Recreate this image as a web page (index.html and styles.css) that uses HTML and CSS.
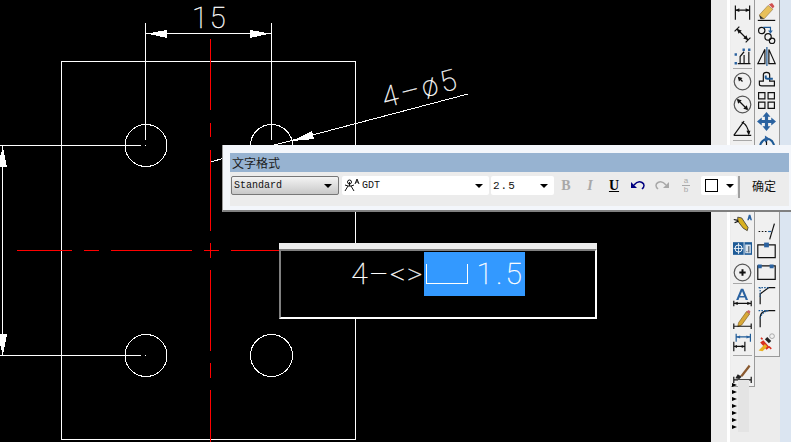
FILE: index.html
```html
<!DOCTYPE html>
<html lang="zh">
  <head>
    <meta charset="UTF-8" />
    <title>文字格式</title>
    <link rel="stylesheet" href="styles.css">
  </head>
  <body>
    <div class="screen">
      <!-- model space: the drawing is a free canvas -->
      <svg class="drawing" width="791" height="442" viewBox="0 0 791 442">
        <g class="white">
          <rect x="61.5" y="61.5" width="294" height="378" />
          <circle cx="146" cy="145.5" r="21" />
          <circle cx="271.5" cy="145.5" r="21" />
          <circle cx="146" cy="355.5" r="21" />
          <circle cx="271.5" cy="355.5" r="21" />
          <path d="M145.5 23V140M271.5 23V140M145.5 33.5H271.5M0 145.5H141M0 355.5H141M2.5 146V355M145 145.5h1M145 355.5h1" />
          <path d="M210 162L468 94" class="soft" />
        </g>
        <g class="red">
          <path d="M210.5 39V110M210.5 123V137M210.5 150V231M210.5 243V258M210.5 270V351M210.5 363V378M210.5 390V442" />
          <path d="M17 250.5H72M84 250.5H99M111 250.5H192M204 250.5H219M231 250.5H279" />
        </g>
        <g class="arrows">
          <polygon points="147,33.5 167,30 167,38" />
          <polygon points="270,33.5 250,30 250,38" />
          <polygon points="3,147 -3,167 7,167" />
          <polygon points="3,355 -3,334 7,334" />
          <polygon points="292,141 312,131 314,139" />
        </g>
        <text class="cad_text" x="192" y="28">15</text>
        <text class="cad_text small" transform="translate(385 108) rotate(-15)">4–ø5</text>
      </svg>

      <aside class="side">
        <div class="col">
          <div class="tool"><svg viewBox="0 0 24 24"><path class="k" d="M3 3V21M21 3V21M3 9H21" /><path class="f" d="M3 9l5-2.500v5zM21 9l-5-2.500v5z" /></svg></div>
          <div class="tool"><svg viewBox="0 0 24 24"><path class="k" d="M2 8L8 2M16 22L22 16M5 5L19 19" /><path class="f" d="M5 5l6 2-4 4zM19 19l-6-2 4-4z" /></svg></div>
          <div class="tool"><svg viewBox="0 0 24 24"><path class="k" d="M6 21H22M9 21V12L14 6M14 21V10M20 21V6" /><path class="b" d="M2 8h3v3H2zM2 19h3v3H2zM12 2h3v3h-3zM19 2h3v3h-3z" /></svg></div>
          <div class="sep"></div>
          <div class="tool h23"><svg viewBox="0 0 24 24"><circle class="g" cx="12" cy="12" r="10.500" /><path class="k" d="M12 12L7 7" /><path class="f" d="M6 6l6 1.500-4.500 4.500z" /></svg></div>
          <div class="tool h23"><svg viewBox="0 0 24 24"><circle class="g" cx="12" cy="12" r="10.500" /><path class="k" d="M6 6L18 18" /><path class="f" d="M5 5l6 1.500-4.500 4.500zM19 19l-6-1.500 4.500-4.500z" /></svg></div>
          <div class="tool h23"><svg viewBox="0 0 24 24"><path class="k" d="M1 22H23M1 22L14 4M11 5Q19 9 20 20" /><path class="f" d="M20 22l-3-6 5 0z" /></svg></div>
          <div class="sep"></div>
          <div class="tool_gap"></div>
          <div class="tool h23"><svg viewBox="0 0 24 24"><path d="M6 4l5 1 8 12-1 4-5-3-7-9z" fill="#d8b020" stroke="#333" /><path class="k" d="M1 7l5 1M2 11l5-2" /><path class="b" d="M18 8l2-7 2 0 2 7h-2l-.5-2h-1l-.5 2z" /></svg></div>
          <div class="tool h27"><svg viewBox="0 0 24 24"><rect x="0" y="4" width="24" height="16" fill="#1d5a96" /><circle cx="7" cy="12" r="4.500" fill="none" stroke="#fff" stroke-width="1.200" /><path d="M7 5V19M1 12H13M14 4V20" stroke="#fff" fill="none" /><rect x="15.500" y="7" width="7" height="11" fill="#d9e4ef" /><path d="M20 9V17M17 16h1" stroke="#123" fill="none" /></svg></div>
          <div class="tool h20"><svg viewBox="0 0 24 24"><circle class="g" cx="12" cy="12" r="10.500" /><path class="k bold" d="M12 8V16M8 12H16" /></svg></div>
          <div class="sep low"></div>
          <div class="tool"><svg viewBox="0 0 24 24"><path class="b" d="M10 1h3l6 14h-3l-1-3H8l-1 3H4zM9 10h5l-2.500-6z" /><path class="k" d="M1 16V23M23 16V23M1 19.500H23" /><path class="f" d="M1 19.500l5-2v4zM23 19.500l-5-2v4z" /></svg></div>
          <div class="tool h23"><svg viewBox="0 0 24 24"><path d="M7 16L17 2l4 3-10 14-5 2z" fill="#d8a838" stroke="#6b4a10" stroke-width=".7" /><path d="M17 2l4 3 1-3-2-2z" fill="#c66" /><path class="k" d="M1 17V24M23 17V24M1 20.500H23" /></svg></div>
          <div class="tool h23"><svg viewBox="0 0 24 24"><path class="bs" d="M4 1V11M22 1V11M4 5H22" /><path class="b" d="M4 5l5-2v4zM22 5l-5-2v4z" /><path class="k" d="M1 11V23M15 11V23M1 17H15" /><path class="f" d="M1 17l4-2v4zM15 17l-4-2v4z" /></svg></div>
          <div class="sep wide"></div>
          <div class="tool"><svg viewBox="0 0 24 24"><path d="M9 15L20 1l2 2-10 13z" fill="#8a5a30" /><path d="M6 13l5 3-3 3-5-1z" fill="#222" /><path class="k" d="M1 16V24M23 16V24M1 20H23" /></svg></div>
        </div>
        <div class="col second">
          <div class="tool"><svg viewBox="0 0 24 24"><path d="M3 15L14 3l6 5-11 12-4 0z" fill="#e8c05a" stroke="#7a5a20" stroke-width=".6" /><path d="M15 2l5 5 2-3-3-4z" fill="#d05050" /><path d="M3 15l6 5H4z" fill="#333" /><path class="k" d="M1 22H23" /></svg></div>
          <div class="tool"><svg viewBox="0 0 24 24"><circle class="k" cx="6" cy="7" r="4" /><circle class="k" cx="14" cy="15" r="4" /><circle class="k" cx="19" cy="20" r="3.500" /><path class="bs" d="M8 3H17V8" /><path class="b" d="M14 7h6l-3 4z" /></svg></div>
          <div class="tool"><svg viewBox="0 0 24 24"><path class="k" d="M10 3V21H1zM15 3V21H23z" /><path class="bs" d="M12.500 0V24" /></svg></div>
          <div class="tool h24"><svg viewBox="0 0 24 24"><path class="k" d="M3 18V14H8V6Q8 3 12 3T16 6V14H22V20H6Q3 20 3 18z" /><path class="bs bold" d="M11 7V10Q11 11 13 11H20" /></svg></div>
          <div class="tool h19"><svg viewBox="0 0 24 24"><path class="k" d="M2 2h8v8H2zM14 2h8v8h-8zM2 14h8v8H2zM14 14h8v8h-8z" /></svg></div>
          <div class="tool"><svg viewBox="0 0 24 24"><path class="b" d="M12 0l5 6h-3v4h4V7l6 5-6 5v-3h-4v4h3l-5 6-5-6h3v-4H6v3l-6-5 6-5v3h4V6H7z" /></svg></div>
          <div class="tool"><svg viewBox="0 0 24 24"><path class="bs bold" d="M5 22Q1 10 12 6Q21 6 22 18" /><path class="k" d="M12 8V22" /><path class="b" d="M10 2l6 4-6 5z" /></svg></div>
          <div class="tool_gap second_gap"></div>
          <div class="tool"><svg viewBox="0 0 24 24"><path class="k" d="M2 12H4M6 12H8M10 12H12" /><path class="bs" d="M14 12H18" /><path class="k" d="M16 22L22 2" /></svg></div>
          <div class="tool h16"><svg viewBox="0 0 24 24"><path class="k" d="M1 5H23V21H1z" /><path class="b" d="M9 2h6v6H9z" /></svg></div>
          <div class="tool h26"><svg viewBox="0 0 24 24"><path class="k" d="M1 5H23V22H1z" /><path class="b" d="M1 3h5v5H1zM16 3h5v5h-5z" /></svg></div>
          <div class="tool"><svg viewBox="0 0 24 24"><path class="k" d="M4 23V10L15 2H23" /><path class="dash" d="M2 2H15M4 14V2" /></svg></div>
          <div class="tool h24"><svg viewBox="0 0 24 24"><path class="k" d="M4 23V10Q5 2 15 2H23" /><path class="dash" d="M4 12Q6 4 14 2M2 2H15" /></svg></div>
          <div class="tool h24"><svg viewBox="0 0 24 24"><path d="M4 12l4-3 8 9-4 3z" fill="#d83020" /><path d="M2 22l8-8 3 3-6 6z" fill="#e8b020" /><path d="M10 8l3-3 5 5-3 3z" fill="#222" /><circle cx="19" cy="4" r="3" fill="none" stroke="#999" /><path d="M5 6l2 2M15 17l3 3" stroke="#d83020" stroke-width="2" /></svg></div>
        </div>
        <div class="flyouts">
          <i></i><i></i><i></i><i></i><i></i><i></i><i></i>
        </div>
      </aside>

      <div class="mtext_bar">
        <div class="bar_title">文字格式</div>
        <div class="bar_row">
          <div class="combo standard"><span>Standard</span><b class="caret"></b></div>
          <div class="combo font">
            <svg class="font_icon" width="16" height="15" viewBox="0 0 16 15"><path d="M1 13L4 8h3l3 5M5.500 8V4M3.500 4a2 2 0 1 0 4 0a2 2 0 1 0 -4 0M4 8L1 7M7 8l3-1" /><path d="M11 6l2-5 2 5M12 4h2" /></svg>
            <span>GDT</span><b class="caret"></b>
          </div>
          <div class="combo size"><span>2.5</span><b class="caret"></b></div>
          <div class="btn serif off">B</div>
          <div class="btn serif italic off">I</div>
          <div class="btn serif under">U</div>
          <div class="btn"><svg width="14" height="11" viewBox="0 0 14 11"><path d="M3 5Q7 0 11 2.500T11 9" fill="none" stroke="#000080" stroke-width="1.500" /><path d="M0 2v6h6z" fill="#000080" /></svg></div>
          <div class="btn"><svg width="14" height="11" viewBox="0 0 14 11"><path d="M11 5Q7 0 3 2.500T3 9" fill="none" stroke="#a8a8a8" stroke-width="1.500" /><path d="M14 2v6H8z" fill="#a8a8a8" /></svg></div>
          <div class="btn stack"><span>a</span><i></i><span>b</span></div>
          <div class="combo color"><i class="swatch"></i><b class="caret"></b></div>
          <div class="row_sep"></div>
          <div class="ok">确定</div>
        </div>
      </div>

      <div class="editor">
        <div class="editor_top"></div>
        <div class="editor_body">
          <span class="typed plain">4–&lt;&gt;</span>
          <span class="selected"><i class="depth"></i><span class="typed">1.5</span></span>
        </div>
      </div>
    </div>
  </body>
</html>
```

FILE: styles.css
```css
html,
body {
  margin: 0;
  background: #000;
}

.screen {
  position: relative;
  width: 791px;
  height: 442px;
  overflow: hidden;
  background: #000;
  display: flex;
  justify-content: flex-end;
}

/* drawing */
.drawing {
  position: absolute;
  left: 0;
  top: 0;
}

.drawing .white * {
  fill: none;
  stroke: #fff;
  stroke-width: 1;
  shape-rendering: crispEdges;
}

.drawing .red * {
  fill: none;
  stroke: #f00;
  stroke-width: 1;
  shape-rendering: crispEdges;
}

.drawing .arrows polygon {
  fill: #fff;
  shape-rendering: crispEdges;
}

.cad_text {
  font-family: Roboto, "Liberation Sans", sans-serif;
  font-weight: 100;
  font-size: 29px;
  letter-spacing: 2px;
  fill: #fff;
  stroke: #fff;
  stroke-width: 0.3px;
}

.cad_text.small {
  letter-spacing: 3.200px;
}

/* toolbars on the right */
.side {
  position: relative;
  width: 80px;
  height: 442px;
  flex: none;
  display: flex;
  box-sizing: border-box;
  padding-left: 20px;
  background: linear-gradient(90deg, #ececec 0, #ececec 16px, #fff 16px, #fff 19px, #ececec 19px);
  border-right: 11px solid #dbe5f1;
}

.col {
  width: 24px;
  height: 387px;
  background: #f0f0f0;
  border-right: 1px solid #9a9a9a;
  border-bottom: 1px solid #9a9a9a;
  box-sizing: border-box;
  display: flex;
  flex-direction: column;
  align-items: center;
  padding-top: 1px;
}

.col.second {
  width: 26px;
  height: 357px;
}

.tool {
  height: 22px;
  flex: none;
  display: flex;
  align-items: center;
  justify-content: center;
}

.tool.h16 {
  height: 16px;
}

.tool.h19 {
  height: 19px;
}

.tool.h20 {
  height: 20px;
}

.tool.h23 {
  height: 23px;
}

.tool.h24 {
  height: 24px;
}

.tool.h26 {
  height: 26px;
}

.tool.h27 {
  height: 27px;
}

.tool svg {
  width: 19px;
  height: 19px;
  flex: none;
}

.tool_gap {
  height: 70px;
  flex: none;
}

.second_gap {
  height: 66px;
}

.sep {
  width: 19px;
  height: 1px;
  margin: 1px 0;
  flex: none;
  background: #a8a8a8;
}

.sep.low {
  margin: 1px 0 2px;
}

.sep.wide {
  margin: 1px 0 6px;
}

.k,
.dash,
.bs,
.g {
  fill: none;
  stroke: #111;
  stroke-width: 1.500;
}

.g {
  stroke: #555;
}

.bs {
  stroke: #1d5a96;
}

.bold {
  stroke-width: 2.500;
}

.dash {
  stroke: #1d5a96;
  stroke-dasharray: 2 1.500;
}

.f {
  fill: #111;
}

.b {
  fill: #2a62a0;
}

/* flyout arrows under the first toolbar */
.flyouts {
  position: absolute;
  left: 21px;
  top: 383px;
  display: flex;
  flex-direction: column;
  gap: 3px;
}

.flyouts i {
  display: block;
  width: 0;
  height: 0;
  border-left: 5px solid #000;
  border-top: 2.500px solid transparent;
  border-bottom: 2.500px solid transparent;
  box-shadow: 9px 0 0 3px #e4e4e4;
}

/* text formatting bar */
.mtext_bar {
  position: absolute;
  left: 222px;
  top: 145px;
  width: 569px;
  height: 67px;
  box-sizing: border-box;
  padding: 8px 2px 4px 7px;
  background: #f3f6fb;
  border-left: 1px solid #9a9a9a;
  border-bottom: 2px solid #808080;
  font-family: "Liberation Mono", monospace;
}

.bar_title {
  height: 19px;
  padding-left: 2px;
  background: #97b3d1;
  font: 12px/19px "Noto Sans CJK SC", sans-serif;
  color: #1c1c1c;
}

.bar_row {
  height: 34px;
  background: #ececec;
  display: flex;
  align-items: flex-start;
  padding-top: 4px;
  box-sizing: border-box;
}

.combo {
  height: 19px;
  box-sizing: border-box;
  background: #fff;
  border-radius: 2px;
  display: flex;
  align-items: center;
  padding: 0 6px 0 2px;
  font-size: 10px;
  color: #111;
  flex: none;
}

.combo span {
  flex: 1;
}

.caret {
  width: 0;
  height: 0;
  border-top: 4px solid #000;
  border-left: 4px solid transparent;
  border-right: 4px solid transparent;
}

.standard {
  width: 108px;
  margin: 0 3px 0 1px;
  border: 1px solid #777;
  background: linear-gradient(#f4f4f4, #c8c8c8);
}

.font {
  width: 147px;
  margin-right: 2px;
  padding-left: 2px;
}

.font span {
  margin-left: 2px;
}

.font_icon {
  fill: none;
  stroke: #111;
  stroke-width: 1;
}

.size {
  width: 63px;
  font-size: 11px;
  letter-spacing: 1px;
}

.btn {
  width: 24px;
  height: 19px;
  flex: none;
  display: flex;
  align-items: center;
  justify-content: center;
  font: bold 14px "Liberation Serif", serif;
  color: #000;
}

.off {
  color: #a8a8a8;
}

.italic {
  font-style: italic;
}

.under {
  text-decoration: underline;
}

.stack {
  flex-direction: column;
  font: 8px/8px "Liberation Sans", sans-serif;
  color: #a8a8a8;
}

.stack i {
  width: 8px;
  height: 1px;
  background: #a8a8a8;
}

.combo.color {
  width: 36px;
  margin: 0 1px 0 3px;
  padding: 0 3px 0 4px;
  justify-content: space-between;
}

.swatch {
  width: 11px;
  height: 11px;
  border: 1px solid #000;
  background: #fff;
}

.row_sep {
  width: 2px;
  height: 22px;
  background: #a0a0a0;
}

.ok {
  margin-left: 12px;
  font: 12px/19px "Noto Sans CJK SC", sans-serif;
  color: #111;
}

/* in-place text editor */
.editor {
  position: absolute;
  left: 279px;
  top: 243px;
  width: 318px;
  height: 76px;
  display: flex;
  flex-direction: column;
}

.editor_top {
  height: 6px;
  background: #eeeeee;
}

.editor_body {
  flex: 1;
  box-sizing: border-box;
  background: #000;
  border: 2px solid;
  border-color: #808080 #fff #fff #808080;
  display: flex;
  justify-content: center;
  align-items: flex-start;
  padding: 1px 0 0 0;
}

.typed {
  font-family: Roboto, "Liberation Sans", sans-serif;
  font-weight: 100;
  font-size: 30px;
  line-height: 44px;
  letter-spacing: 2px;
  color: #fff;
  -webkit-text-stroke: 0.3px #fff;
}

.typed.plain {
  letter-spacing: 1.500px;
}

.selected {
  display: flex;
  height: 44px;
  width: 101px;
  box-sizing: border-box;
  background: #3399ff;
  padding: 0 0 0 2px;
}

.selected .typed {
  margin-left: 9px;
  letter-spacing: 3px;
}

.depth {
  width: 44px;
  height: 20px;
  margin-top: 12px;
  box-sizing: border-box;
  border: 1px solid #fff;
  border-top: 0;
}
```
